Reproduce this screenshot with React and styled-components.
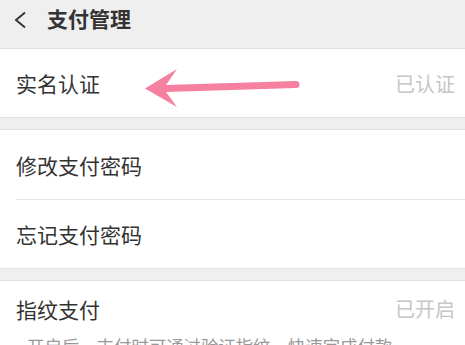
import React from "react";
import styled, { createGlobalStyle } from "styled-components";

const Global = createGlobalStyle`
  html, body {
    margin: 0;
    padding: 0;
    background: #efefef;
    overflow: hidden;
  }
  body {
    font-family: "Noto Sans CJK SC", "Noto Sans", sans-serif;
    color: #333;
  }
`;

const Page = styled.div`
  position: relative;
  width: 465px;
  height: 345px;
  overflow: hidden;
  background: #efefef;
`;

const Header = styled.div`
  height: 48px;
  display: flex;
  align-items: center;
  border-bottom: 1px solid #dedede;
  padding-left: 14px;
  box-sizing: content-box;
`;

const Back = styled.svg`
  width: 13px;
  height: 18px;
  margin-top: -8px;
`;

const Title = styled.h1`
  margin: -12px 0 0 20px;
  font-size: 21px;
  font-weight: 700;
  line-height: 1;
  color: #333;
`;

const Group = styled.div`
  background: #fff;
  border-bottom: 1px solid #e2e2e2;
  border-top: ${(p) => (p.$first ? "none" : "1px solid #e2e2e2")};
  margin-top: ${(p) => (p.$first ? "0" : "11px")};
`;

const Row = styled.div`
  height: ${(p) => p.$h || 69}px;
  display: flex;
  align-items: center;
  justify-content: space-between;
  padding: 0 10px 0 16px;
  position: relative;
  &:not(:last-child)::after {
    content: "";
    position: absolute;
    left: 16px;
    right: 0;
    bottom: 0;
    height: 1px;
    background: #e6e6e6;
  }
`;

const Label = styled.span`
  font-size: 21px;
  color: #333;
`;

const Value = styled.span`
  font-size: 20px;
  color: #c6c6c6;
`;

const FingerItem = styled.div`
  padding: 12px 10px 0 16px;
`;

const FingerTop = styled.div`
  display: flex;
  justify-content: space-between;
  align-items: center;
  line-height: 32px;
`;

const Hint = styled.div`
  margin-top: 9px;
  padding-left: 11px;
  font-size: 17.4px;
  line-height: 24px;
  color: #999;
  white-space: nowrap;
`;

const Arrow = styled.svg`
  position: absolute;
  left: 0;
  top: 0;
  pointer-events: none;
`;

export default function App() {
  return (
    <Page>
      <Global />
      <Header>
        <Back viewBox="0 0 13 18">
          <path d="M11 1.5 L2 9 L11 16.5" fill="none" stroke="#333" strokeWidth="1.9" />
        </Back>
        <Title>支付管理</Title>
      </Header>
      <Group $first>
        <Row $h={68}>
          <Label>实名认证</Label>
          <Value>已认证</Value>
        </Row>
      </Group>
      <Group>
        <Row $h={70}>
          <Label>修改支付密码</Label>
        </Row>
        <Row $h={68}>
          <Label>忘记支付密码</Label>
        </Row>
      </Group>
      <Group>
        <FingerItem>
          <FingerTop>
            <Label>指纹支付</Label>
            <Value>已开启</Value>
          </FingerTop>
          <Hint>开启后，支付时可通过验证指纹，快速完成付款</Hint>
        </FingerItem>
      </Group>
      <Arrow width="465" height="345" viewBox="0 0 465 345">
        <path
          d="M145 88.5 L177 69 L166 85 L166 92 L177 107 Z"
          fill="#f5809f"
        />
        <line x1="166" y1="88.5" x2="296" y2="84.5" stroke="#f5809f" strokeWidth="7" strokeLinecap="round" />
      </Arrow>
    </Page>
  );
}
